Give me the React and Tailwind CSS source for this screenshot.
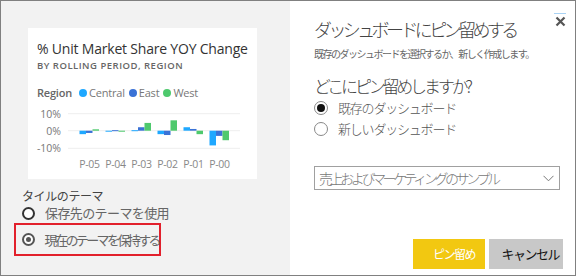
const JP = { fontFamily: '"Noto Sans CJK JP", "Noto Sans", sans-serif' }
const LAT = { fontFamily: '"Open Sans", "Noto Sans", sans-serif' }

const groups = [
  { label: 'P-05', c: -2, e: -1.3, w: 0.8 },
  { label: 'P-04', c: -0.5, e: 0.3, w: -0.5 },
  { label: 'P-03', c: 0.3, e: 2, w: 4.5 },
  { label: 'P-02', c: -2, e: -2.5, w: 6 },
  { label: 'P-01', c: 2, e: 1, w: -2 },
  { label: 'P-00', c: -8.5, e: -3, w: -5.5 },
]

function Bar({ x, v, fill }) {
  const zero = 25.7
  const h = Math.abs(v) * 1.73
  const y = v >= 0 ? zero - h : zero
  return <rect x={x} y={y} width="6.5" height={Math.max(h, 1)} fill={fill} />
}

function Chart() {
  return (
    <svg width="229" height="68" viewBox="0 0 229 68" className="block">
      {[8.7, 25.7, 43.3].map((y) => (
        <line key={y} x1="40" x2="212" y1={y} y2={y} stroke="#eeeeee" strokeWidth="1" />
      ))}
      <g fontSize="10.5" fill="#777" style={LAT} textAnchor="end">
        <text x="33" y="12.5">10%</text>
        <text x="33" y="29.5">0%</text>
        <text x="33" y="47">-10%</text>
      </g>
      {groups.map((g, i) => {
        const cx = 61.5 + i * 26
        return (
          <g key={g.label}>
            <Bar x={cx - 10} v={g.c} fill="#1fa8ff" />
            <Bar x={cx - 3.5} v={g.e} fill="#3a72d6" />
            <Bar x={cx + 3} v={g.w} fill="#4ec96d" />
            <text x={cx} y="63" fontSize="10.5" fill="#888" textAnchor="middle" letterSpacing="-0.3" style={LAT}>
              {g.label}
            </text>
          </g>
        )
      })}
    </svg>
  )
}

function Dot({ color }) {
  return <span className="inline-block w-[8px] h-[8px] rounded-full mr-[2px]" style={{ backgroundColor: color }} />
}

export default function App() {
  return (
    <div className="w-[576px] h-[276px] border border-[#808080] flex bg-white whitespace-nowrap" style={JP}>
      {/* left: tile preview */}
      <div className="w-[289px] bg-[#f2f2f2] flex flex-col">
        <div className="mt-[27px] ml-[27px] w-[229px] h-[151px] bg-white flex flex-col overflow-hidden">
          <div className="pl-[9px] pt-[11px] text-[14px] leading-[20px] text-[#333] tracking-[-0.2px]" style={LAT}>
            % Unit Market Share YOY Change
          </div>
          <div className="pl-[9px] text-[9.5px] leading-[14px] font-semibold tracking-[0.5px] text-[#666]" style={LAT}>
            BY ROLLING PERIOD, REGION
          </div>
          <div className="pl-[9px] mt-[13px] flex items-center gap-[4px] text-[11px] leading-[14px] text-[#777] tracking-[-0.2px]" style={LAT}>
            <span className="font-semibold text-[#666] mr-[3px]">Region</span>
            <span className="flex items-center"><Dot color="#1fa8ff" />Central</span>
            <span className="flex items-center"><Dot color="#3a72d6" />East</span>
            <span className="flex items-center"><Dot color="#4ec96d" />West</span>
          </div>
          <div className="mt-[5px]">
            <Chart />
          </div>
        </div>

        <div className="ml-[21px] mt-[9px] text-[12px] leading-[16px] text-[#444] tracking-[-0.4px]">タイルのテーマ</div>
        <div className="ml-[21px] flex items-center h-[18px]">
          <span className="w-[13px] h-[13px] rounded-full border-2 border-[#333] bg-white" />
          <span className="ml-[10px] text-[13px] text-[#666] tracking-[-0.6px]">保存先のテーマを使用</span>
        </div>
        <div className="ml-[13px] mt-[1px] w-[147px] h-[33px] border-2 border-[#e2202c] flex items-center pl-[6px]">
          <span className="w-[13px] h-[13px] rounded-full border-2 border-[#555] bg-white flex items-center justify-center">
            <span className="w-[5px] h-[5px] rounded-full bg-[#555]" />
          </span>
          <span className="ml-[10px] text-[13px] text-[#666] tracking-[-2.6px]">現在のテーマを保持する</span>
        </div>
      </div>

      {/* right: pin form */}
      <div className="flex-1 relative flex flex-col pl-[24px] pr-[12px]">
        <div className="absolute top-[12px] right-[9px] w-[12px] flex flex-col items-center">
          <span className="block w-[12px] h-px bg-[#a9d3f5]" />
          <svg width="11" height="11" viewBox="0 0 11 11" className="mt-[2px]">
            <path d="M1.5 1.5 L9.5 9.5 M9.5 1.5 L1.5 9.5" stroke="#555" strokeWidth="2.2" />
          </svg>
        </div>
        <div className="mt-[16px] text-[18px] leading-[24px] font-light text-[#444] tracking-[-3.6px]">
          ダッシュボードにピン留めする
        </div>
        <div className="mt-[6px] text-[10px] leading-[14px] text-[#666] tracking-[-1.5px]">
          既存のダッシュボードを選択するか、新しく作成します。
        </div>
        <div className="mt-[14px] text-[17px] leading-[22px] font-light text-[#444] tracking-[-3.2px]">
          どこにピン留めしますか?
        </div>
        <div className="flex items-center h-[18px] leading-[18px] mt-[2px]">
          <span className="w-[14px] h-[14px] rounded-full border border-[#888] flex items-center justify-center">
            <span className="w-[8px] h-[8px] rounded-full bg-[#111]" />
          </span>
          <span className="ml-[10px] text-[13px] text-[#555] font-light tracking-[-1.2px]">既存のダッシュボード</span>
        </div>
        <div className="flex items-center h-[18px] leading-[18px] mt-[3px]">
          <span className="w-[14px] h-[14px] rounded-full border border-[#888]" />
          <span className="ml-[10px] text-[13px] text-[#555] font-light tracking-[-1.2px]">新しいダッシュボード</span>
        </div>
        <div className="mt-[28px] w-[246px] h-[24px] border border-[#a0a0a0] flex items-center justify-between pl-[4px] pr-[5px]">
          <span className="text-[14px] leading-[18px] text-[#777] font-light tracking-[-3.4px]">売上およびマーケティングのサンプル</span>
          <svg width="11" height="7" viewBox="0 0 11 7">
            <path d="M0.5 0.8 L5.5 5.8 L10.5 0.8" fill="none" stroke="#777" strokeWidth="1" />
          </svg>
        </div>
        <div className="mt-auto mb-[6px] flex justify-end gap-[4px]">
          <div className="w-[72px] h-[30px] bg-[#f2c811] flex items-center justify-end pr-[10px] text-[12px] text-white tracking-[-1.5px]">
            ピン留め
          </div>
          <div className="w-[74px] h-[30px] bg-[#c8c8c8] flex items-center justify-end pr-[4px] text-[13px] text-[#111] tracking-[-1.5px]">
            キャンセル
          </div>
        </div>
      </div>
    </div>
  )
}
